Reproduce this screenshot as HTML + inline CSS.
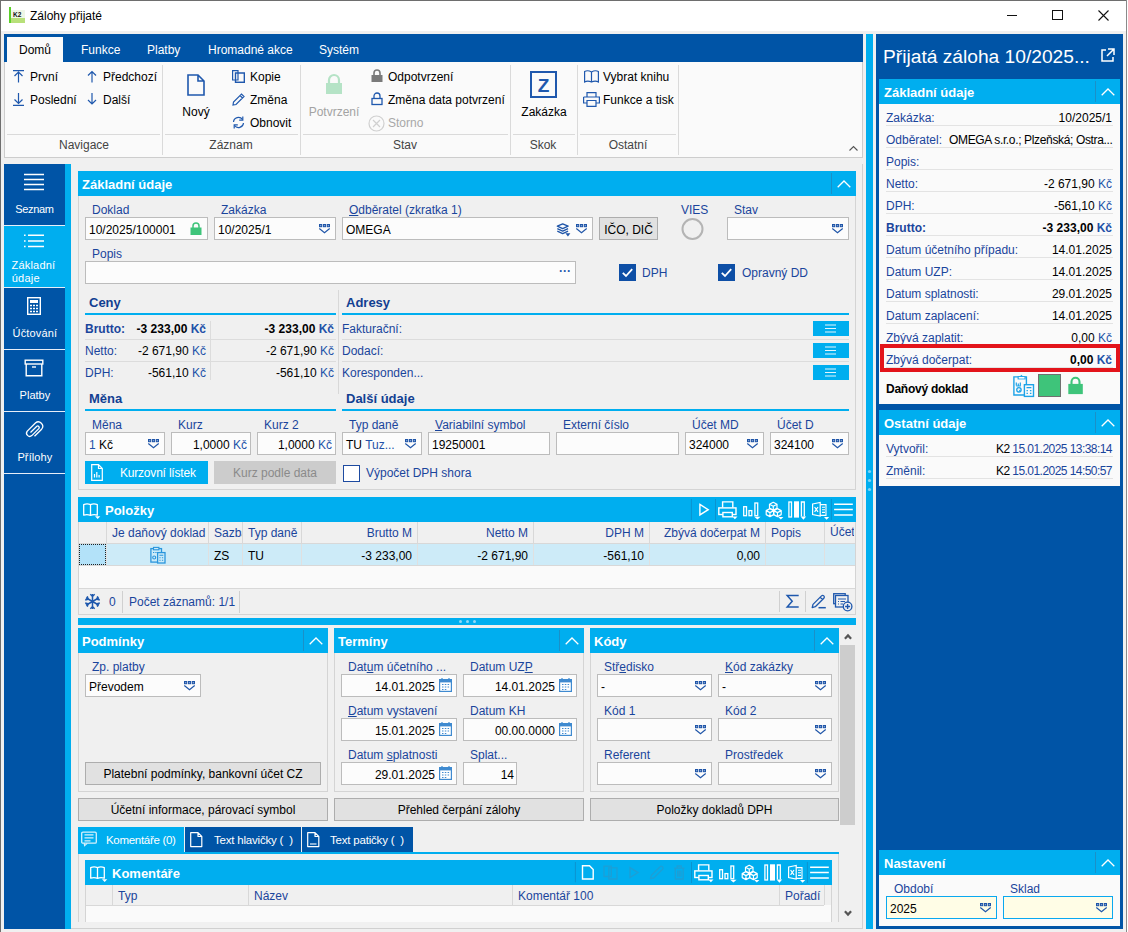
<!DOCTYPE html><html><head><meta charset="utf-8"><style>
html,body{margin:0;padding:0;width:1128px;height:932px;overflow:hidden;background:#f0f0f0;}
.a{position:absolute;box-sizing:border-box;}
.t{font-family:"Liberation Sans", sans-serif;white-space:nowrap;}
svg{overflow:visible}
</style></head><body>
<div class="a" style="left:0px;top:0px;width:1128px;height:932px;background:#f0f0f0"></div>
<div class="a" style="left:1127px;top:0px;width:1px;height:932px;background:#ffffff"></div>
<div class="a" style="left:0px;top:0px;width:1127px;height:31px;background:#ffffff"></div>
<div class="a" style="left:0px;top:0px;width:1px;height:932px;background:#6e6e6e"></div>
<div class="a" style="left:0px;top:0px;width:1127px;height:1px;background:#6e6e6e"></div>
<div class="a" style="left:1126px;top:0px;width:1px;height:932px;background:#8a8a8a"></div>
<svg class="a" style="left:9px;top:7px;" width="17" height="17" viewBox="0 0 17 17"><rect x="0" y="0" width="2" height="16" fill="#5ccf2a"/><rect x="2" y="3" width="14" height="13" fill="#eef6e6"/><rect x="2" y="11" width="14" height="5" fill="#b8e07a"/><text x="4" y="10" font-family="Liberation Sans" font-weight="700" font-size="6.5" fill="#111">K2</text></svg>
<div class="a t" style="left:30px;top:10px;font-size:12px;line-height:12px;color:#000;font-weight:400;">Zálohy přijaté</div>
<div class="a" style="left:1007px;top:15px;width:10px;height:1px;background:#111"></div>
<div class="a" style="left:1052px;top:10px;width:11px;height:10px;border:1px solid #111"></div>
<svg class="a" style="left:1098px;top:10px;" width="11" height="11" viewBox="0 0 11 11"><path d="M0.5 0.5 L10.5 10.5 M10.5 0.5 L0.5 10.5" stroke="#111" stroke-width="1.1"/></svg>
<div class="a" style="left:4px;top:34px;width:859px;height:28px;background:#0054a6"></div>
<div class="a" style="left:7px;top:37px;width:56px;height:25px;background:#fafafa"></div>
<div class="a t" style="left:19px;top:44px;font-size:12px;line-height:12px;color:#000;font-weight:400;">Domů</div>
<div class="a t" style="left:81px;top:44px;font-size:12px;line-height:12px;color:#fff;font-weight:400;">Funkce</div>
<div class="a t" style="left:147px;top:44px;font-size:12px;line-height:12px;color:#fff;font-weight:400;">Platby</div>
<div class="a t" style="left:208px;top:44px;font-size:12px;line-height:12px;color:#fff;font-weight:400;">Hromadné akce</div>
<div class="a t" style="left:319px;top:44px;font-size:12px;line-height:12px;color:#fff;font-weight:400;">Systém</div>
<div class="a" style="left:4px;top:62px;width:859px;height:96px;background:#fafafa;border:1px solid #cdcdcd;border-top:none"></div>
<div class="a" style="left:162px;top:65px;width:1px;height:90px;background:#dadada"></div>
<div class="a" style="left:300px;top:65px;width:1px;height:90px;background:#dadada"></div>
<div class="a" style="left:510px;top:65px;width:1px;height:90px;background:#dadada"></div>
<div class="a" style="left:577px;top:65px;width:1px;height:90px;background:#dadada"></div>
<div class="a" style="left:678px;top:65px;width:1px;height:90px;background:#dadada"></div>
<div class="a" style="left:7px;top:134px;width:153px;height:1px;background:#dadada"></div>
<div class="a" style="left:165px;top:134px;width:133px;height:1px;background:#dadada"></div>
<div class="a" style="left:303px;top:134px;width:205px;height:1px;background:#dadada"></div>
<div class="a" style="left:513px;top:134px;width:62px;height:1px;background:#dadada"></div>
<div class="a" style="left:580px;top:134px;width:96px;height:1px;background:#dadada"></div>
<div class="a t" style="left:-16.0px;width:200px;text-align:center;top:139px;font-size:12px;line-height:12px;color:#444;font-weight:400;">Navigace</div>
<div class="a t" style="left:131.0px;width:200px;text-align:center;top:139px;font-size:12px;line-height:12px;color:#444;font-weight:400;">Záznam</div>
<div class="a t" style="left:305.0px;width:200px;text-align:center;top:139px;font-size:12px;line-height:12px;color:#444;font-weight:400;">Stav</div>
<div class="a t" style="left:443.0px;width:200px;text-align:center;top:139px;font-size:12px;line-height:12px;color:#444;font-weight:400;">Skok</div>
<div class="a t" style="left:528.0px;width:200px;text-align:center;top:139px;font-size:12px;line-height:12px;color:#444;font-weight:400;">Ostatní</div>
<svg class="a" style="left:849px;top:146px;" width="9" height="5" viewBox="0 0 9 5"><path d="M0.5 4.5 L4.5 0.5 L8.5 4.5" stroke="#555" fill="none" stroke-width="1.1"/></svg>
<svg class="a" style="left:13px;top:70px;" width="11" height="13" viewBox="0 0 11 13"><path d="M0 0.6 H11 M5.5 2 V12.5 M1.5 6 L5.5 2 L9.5 6" stroke="#1f58ad" fill="none" stroke-width="1.2"/></svg>
<div class="a t" style="left:30px;top:71px;font-size:12px;line-height:12px;color:#000;font-weight:400;">První</div>
<svg class="a" style="left:13px;top:93px;" width="11" height="13" viewBox="0 0 11 13"><path d="M0 12.4 H11 M5.5 0 V10.5 M1.5 6.5 L5.5 10.5 L9.5 6.5" stroke="#1f58ad" fill="none" stroke-width="1.2"/></svg>
<div class="a t" style="left:30px;top:94px;font-size:12px;line-height:12px;color:#000;font-weight:400;">Poslední</div>
<svg class="a" style="left:87px;top:70px;" width="10" height="13" viewBox="0 0 10 13"><path d="M5 1.5 V12.5 M1 5.5 L5 1.5 L9 5.5" stroke="#1f58ad" fill="none" stroke-width="1.2"/></svg>
<div class="a t" style="left:103px;top:71px;font-size:12px;line-height:12px;color:#000;font-weight:400;">Předchozí</div>
<svg class="a" style="left:87px;top:93px;" width="10" height="13" viewBox="0 0 10 13"><path d="M5 0 V11 M1 7 L5 11 L9 7" stroke="#1f58ad" fill="none" stroke-width="1.2"/></svg>
<div class="a t" style="left:103px;top:94px;font-size:12px;line-height:12px;color:#000;font-weight:400;">Další</div>
<svg class="a" style="left:187px;top:74px;" width="18" height="22" viewBox="0 0 18 22"><path d="M1 1 H11 L17 7 V21 H1 Z M11 1 V7 H17" stroke="#1f58ad" fill="none" stroke-width="1.6"/></svg>
<div class="a t" style="left:156.0px;width:80px;text-align:center;top:106px;font-size:12px;line-height:12px;color:#000;font-weight:400;">Nový</div>
<svg class="a" style="left:232px;top:70px;" width="13" height="13" viewBox="0 0 13 13"><path d="M0.6 0.6 H6 V10 H0.6 Z M3.5 3 H12.4 V12.4 H3.5 Z" stroke="#1f58ad" fill="#fafafa" stroke-width="1.2"/><path d="M3.5 3 H12.4 V12.4 H3.5 Z" stroke="#1f58ad" fill="none" stroke-width="1.2"/></svg>
<div class="a t" style="left:250px;top:71px;font-size:12px;line-height:12px;color:#000;font-weight:400;">Kopie</div>
<svg class="a" style="left:232px;top:93px;" width="13" height="13" viewBox="0 0 13 13"><path d="M1 12 L1.5 9 L9.5 1 L12 3.5 L4 11.5 Z M8 2.5 L10.5 5" stroke="#1f58ad" fill="none" stroke-width="1.2"/></svg>
<div class="a t" style="left:250px;top:94px;font-size:12px;line-height:12px;color:#000;font-weight:400;">Změna</div>
<svg class="a" style="left:232px;top:116px;" width="13" height="13" viewBox="0 0 13 13"><path d="M1.5 6 A5 5 0 0 1 10.5 3.5 M11.5 7 A5 5 0 0 1 2.5 9.5" stroke="#1f58ad" fill="none" stroke-width="1.2"/><path d="M10.8 0.5 V4.2 H7.2 M2.2 12.5 V8.8 H5.8" stroke="#1f58ad" fill="none" stroke-width="1.2"/></svg>
<div class="a t" style="left:250px;top:117px;font-size:12px;line-height:12px;color:#000;font-weight:400;">Obnovit</div>
<svg class="a" style="left:325px;top:74px;" width="18" height="21" viewBox="0 0 18 21"><path d="M4 9 V6 A5 5 0 0 1 14 6 V9" stroke="#b5e3c6" fill="none" stroke-width="2.2"/><rect x="1" y="9" width="16" height="11" fill="#b5e3c6"/></svg>
<div class="a t" style="left:284.0px;width:100px;text-align:center;top:106px;font-size:12px;line-height:12px;color:#a3a3a3;font-weight:400;">Potvrzení</div>
<svg class="a" style="left:371px;top:69px;" width="12" height="13" viewBox="0 0 12 13"><path d="M3 6 V4 A3 3 0 0 1 9 4 V6" stroke="#7a7a7a" fill="none" stroke-width="1.6"/><rect x="0.5" y="6" width="11" height="7" fill="#7a7a7a"/></svg>
<div class="a t" style="left:388px;top:71px;font-size:12px;line-height:12px;color:#000;font-weight:400;">Odpotvrzení</div>
<svg class="a" style="left:371px;top:92px;" width="12" height="13" viewBox="0 0 12 13"><path d="M3 6 V4 A3 3 0 0 1 9 4 V6" stroke="#1f58ad" fill="none" stroke-width="1.3"/><rect x="1" y="6.5" width="10" height="6" fill="none" stroke="#1f58ad" stroke-width="1.3"/></svg>
<div class="a t" style="left:388px;top:94px;font-size:12px;line-height:12px;color:#000;font-weight:400;">Změna data potvrzení</div>
<svg class="a" style="left:368px;top:115px;" width="17" height="17" viewBox="0 0 17 17"><circle cx="8.5" cy="8.5" r="7.5" stroke="#d0d0d0" fill="none" stroke-width="1.2"/><path d="M5 5 L12 12 M12 5 L5 12" stroke="#d0d0d0" stroke-width="1.2"/></svg>
<div class="a t" style="left:388px;top:117px;font-size:12px;line-height:12px;color:#a8a8a8;font-weight:400;">Storno</div>
<svg class="a" style="left:530px;top:71px;" width="27" height="27" viewBox="0 0 27 27"><rect x="1" y="1" width="25" height="25" fill="none" stroke="#1f58ad" stroke-width="2"/><text x="13.5" y="21" text-anchor="middle" font-family="Liberation Sans" font-weight="700" font-size="19" fill="#1f58ad">Z</text></svg>
<div class="a t" style="left:504.0px;width:80px;text-align:center;top:106px;font-size:12px;line-height:12px;color:#000;font-weight:400;">Zakázka</div>
<svg class="a" style="left:584px;top:70px;" width="15" height="13" viewBox="0 0 15 13"><path d="M7.5 2 C5 0.5 2.5 0.5 0.6 1.5 V12 C2.5 11 5 11 7.5 12 C10 11 12.5 11 14.4 12 V1.5 C12.5 0.5 10 0.5 7.5 2 Z M7.5 2 V12" stroke="#1f58ad" fill="none" stroke-width="1.2"/></svg>
<div class="a t" style="left:603px;top:71px;font-size:12px;line-height:12px;color:#000;font-weight:400;">Vybrat knihu</div>
<svg class="a" style="left:583px;top:92px;" width="17" height="15" viewBox="0 0 17 15"><path d="M4 5 V0.6 H13 V5 M0.6 5 H16.4 V11 H13 M4 11 H0.6 V5 M4 8.5 H13 V14.4 H4 Z" stroke="#1f58ad" fill="none" stroke-width="1.2"/></svg>
<div class="a t" style="left:603px;top:94px;font-size:12px;line-height:12px;color:#000;font-weight:400;">Funkce a tisk</div>
<div class="a" style="left:4px;top:164px;width:61px;height:765px;background:#0054a6"></div>
<div class="a" style="left:65px;top:164px;width:6px;height:765px;background:#00aeef"></div>
<div class="a" style="left:4px;top:226px;width:61px;height:61px;background:#00aeef"></div>
<div class="a" style="left:4px;top:225px;width:61px;height:1px;background:#e8eef8"></div>
<div class="a" style="left:4px;top:287px;width:61px;height:1px;background:#e8eef8"></div>
<div class="a" style="left:4px;top:349px;width:61px;height:1px;background:#e8eef8"></div>
<div class="a" style="left:4px;top:411px;width:61px;height:1px;background:#e8eef8"></div>
<div class="a" style="left:4px;top:473px;width:61px;height:1px;background:#e8eef8"></div>
<svg class="a" style="left:24px;top:173px;" width="20" height="18" viewBox="0 0 20 18"><path d="M0 1.5 H20 M0 6.5 H20 M0 11.5 H20 M0 16.5 H20" stroke="#fff" stroke-width="1.4"/></svg>
<div class="a t" style="left:-5.5px;width:80px;text-align:center;top:204px;font-size:11px;line-height:11px;color:#fff;font-weight:400;letter-spacing:-0.35px">Seznam</div>
<svg class="a" style="left:23px;top:233px;" width="22" height="16" viewBox="0 0 22 16"><path d="M5 2.3 H21 M5 8 H21 M5 13.5 H21" stroke="#fff" stroke-width="1.5"/><path d="M1 2.3 H2.6 M1 8 H2.6 M1 13.5 H2.6" stroke="#fff" stroke-width="1.5"/></svg>
<div class="a t" style="left:11.5px;top:260px;font-size:11px;line-height:11px;color:#fff;font-weight:400;letter-spacing:0.2px">Základní</div>
<div class="a t" style="left:11.8px;top:273px;font-size:11px;line-height:11px;color:#fff;font-weight:400;letter-spacing:0.2px">údaje</div>
<svg class="a" style="left:27px;top:297px;" width="14" height="18" viewBox="0 0 14 18"><rect x="0.7" y="0.7" width="12.6" height="16.6" fill="none" stroke="#fff" stroke-width="1.4"/><rect x="3" y="3" width="8" height="3" fill="#fff"/><path d="M3 8.5 H5 M6 8.5 H8 M9 8.5 H11 M3 11.5 H5 M6 11.5 H8 M9 11.5 H11 M3 14.5 H5 M6 14.5 H8 M9 14.5 H11" stroke="#fff" stroke-width="1.6"/></svg>
<div class="a t" style="left:-5.100000000000001px;width:80px;text-align:center;top:328px;font-size:11px;line-height:11px;color:#fff;font-weight:400;letter-spacing:0.15px">Účtování</div>
<svg class="a" style="left:24px;top:359px;" width="20" height="18" viewBox="0 0 20 18"><rect x="1.2" y="1.2" width="17.6" height="3.8" fill="none" stroke="#fff" stroke-width="1.4"/><path d="M2.2 5 V16.8 H17.8 V5" fill="none" stroke="#fff" stroke-width="1.4"/><path d="M8 8 H12" stroke="#fff" stroke-width="1.4"/></svg>
<div class="a t" style="left:-5.100000000000001px;width:80px;text-align:center;top:390px;font-size:11px;line-height:11px;color:#fff;font-weight:400;">Platby</div>
<svg class="a" style="left:25px;top:421px;" width="18" height="19" viewBox="0 0 18 19"><path d="M5.5 11.5 L11.8 5.2 A1.6 1.6 0 0 1 14 7.4 L6.8 14.6 A3.2 3.2 0 0 1 2.3 10.1 L10.4 2 A4.4 4.4 0 0 1 16.6 8.2 L9.5 15.3" stroke="#fff" fill="none" stroke-width="1.3"/></svg>
<div class="a t" style="left:-5.100000000000001px;width:80px;text-align:center;top:452px;font-size:11px;line-height:11px;color:#fff;font-weight:400;letter-spacing:0.1px">Přílohy</div>
<div class="a" style="left:71px;top:164px;width:791px;height:765px;background:#f0f0f0"></div>
<div class="a" style="left:862px;top:164px;width:1px;height:765px;background:#d0d0d0"></div>
<div class="a" style="left:866px;top:34px;width:7px;height:895px;background:#00aeef"></div>
<svg class="a" style="left:867px;top:469px;" width="5" height="5" viewBox="0 0 5 5"><circle cx="2.5" cy="2.5" r="1.6" fill="#7fd3f5"/></svg>
<svg class="a" style="left:867px;top:478px;" width="5" height="5" viewBox="0 0 5 5"><circle cx="2.5" cy="2.5" r="1.6" fill="#7fd3f5"/></svg>
<svg class="a" style="left:867px;top:487px;" width="5" height="5" viewBox="0 0 5 5"><circle cx="2.5" cy="2.5" r="1.6" fill="#7fd3f5"/></svg>
<div class="a" style="left:876px;top:34px;width:247px;height:895px;background:#0054a6"></div>
<div class="a t" style="left:883px;top:47px;font-size:19.2px;line-height:19.2px;color:#fff;font-weight:400;">Přijatá záloha 10/2025...</div>
<svg class="a" style="left:1101px;top:48px;" width="14" height="14" viewBox="0 0 14 14"><path d="M5 2 H1 V13 H12 V9" stroke="#fff" fill="none" stroke-width="1.5"/><path d="M7 1 H13 V7 M13 1 L6 8" stroke="#fff" fill="none" stroke-width="1.5"/></svg>
<div class="a" style="left:879px;top:79px;width:241px;height:25px;background:#00aeef"></div>
<div class="a t" style="left:884px;top:86px;font-size:13px;line-height:13px;color:#fff;font-weight:700;">Základní údaje</div>
<div class="a" style="left:1095px;top:81px;width:1px;height:21px;background:#1a90c8"></div>
<svg class="a" style="left:1101px;top:88px;" width="14" height="8" viewBox="0 0 14 8"><path d="M0.7 7.3 L7 1 L13.3 7.3" stroke="#fff" fill="none" stroke-width="1.3"/></svg>
<div class="a" style="left:879px;top:104px;width:241px;height:300px;background:#fafafa"></div>
<div class="a" style="left:886px;top:125px;width:227px;height:1px;background:#e3e3e3"></div>
<div class="a t" style="left:886px;top:112px;font-size:12px;line-height:12px;color:#1a459c;font-weight:400;">Zakázka:</div>
<div class="a t" style="left:912px;width:200px;text-align:right;top:112px;font-size:12px;line-height:12px;color:#000;font-weight:400;">10/2025/1</div>
<div class="a" style="left:886px;top:147px;width:227px;height:1px;background:#e3e3e3"></div>
<div class="a t" style="left:886px;top:134px;font-size:12px;line-height:12px;color:#1a459c;font-weight:400;">Odběratel:</div>
<div class="a" style="left:886px;top:169px;width:227px;height:1px;background:#e3e3e3"></div>
<div class="a t" style="left:886px;top:156px;font-size:12px;line-height:12px;color:#1a459c;font-weight:400;">Popis:</div>
<div class="a" style="left:886px;top:191px;width:227px;height:1px;background:#e3e3e3"></div>
<div class="a t" style="left:886px;top:178px;font-size:12px;line-height:12px;color:#1a459c;font-weight:400;">Netto:</div>
<div class="a t" style="left:912px;width:200px;text-align:right;top:178px;font-size:12px;line-height:12px;color:#000;font-weight:400;">-2 671,90 <span style="color:#2352a8">Kč</span></div>
<div class="a" style="left:886px;top:213px;width:227px;height:1px;background:#e3e3e3"></div>
<div class="a t" style="left:886px;top:200px;font-size:12px;line-height:12px;color:#1a459c;font-weight:400;">DPH:</div>
<div class="a t" style="left:912px;width:200px;text-align:right;top:200px;font-size:12px;line-height:12px;color:#000;font-weight:400;">-561,10 <span style="color:#2352a8">Kč</span></div>
<div class="a" style="left:886px;top:235px;width:227px;height:1px;background:#e3e3e3"></div>
<div class="a t" style="left:886px;top:222px;font-size:12px;line-height:12px;color:#1a459c;font-weight:700;">Brutto:</div>
<div class="a t" style="left:912px;width:200px;text-align:right;top:222px;font-size:12px;line-height:12px;color:#000;font-weight:700;">-3 233,00 <span style="color:#2352a8">Kč</span></div>
<div class="a" style="left:886px;top:257px;width:227px;height:1px;background:#e3e3e3"></div>
<div class="a t" style="left:886px;top:244px;font-size:12px;line-height:12px;color:#1a459c;font-weight:400;">Datum účetního případu:</div>
<div class="a t" style="left:912px;width:200px;text-align:right;top:244px;font-size:12px;line-height:12px;color:#000;font-weight:400;">14.01.2025</div>
<div class="a" style="left:886px;top:279px;width:227px;height:1px;background:#e3e3e3"></div>
<div class="a t" style="left:886px;top:266px;font-size:12px;line-height:12px;color:#1a459c;font-weight:400;">Datum UZP:</div>
<div class="a t" style="left:912px;width:200px;text-align:right;top:266px;font-size:12px;line-height:12px;color:#000;font-weight:400;">14.01.2025</div>
<div class="a" style="left:886px;top:301px;width:227px;height:1px;background:#e3e3e3"></div>
<div class="a t" style="left:886px;top:288px;font-size:12px;line-height:12px;color:#1a459c;font-weight:400;">Datum splatnosti:</div>
<div class="a t" style="left:912px;width:200px;text-align:right;top:288px;font-size:12px;line-height:12px;color:#000;font-weight:400;">29.01.2025</div>
<div class="a" style="left:886px;top:323px;width:227px;height:1px;background:#e3e3e3"></div>
<div class="a t" style="left:886px;top:310px;font-size:12px;line-height:12px;color:#1a459c;font-weight:400;">Datum zaplacení:</div>
<div class="a t" style="left:912px;width:200px;text-align:right;top:310px;font-size:12px;line-height:12px;color:#000;font-weight:400;">14.01.2025</div>
<div class="a" style="left:886px;top:345px;width:227px;height:1px;background:#e3e3e3"></div>
<div class="a t" style="left:886px;top:332px;font-size:12px;line-height:12px;color:#1a459c;font-weight:400;">Zbývá zaplatit:</div>
<div class="a t" style="left:912px;width:200px;text-align:right;top:332px;font-size:12px;line-height:12px;color:#000;font-weight:400;">0,00 <span style="color:#2352a8">Kč</span></div>
<div class="a" style="left:886px;top:367px;width:227px;height:1px;background:#e3e3e3"></div>
<div class="a t" style="left:886px;top:354px;font-size:12px;line-height:12px;color:#1a459c;font-weight:400;">Zbývá dočerpat:</div>
<div class="a t" style="left:912px;width:200px;text-align:right;top:354px;font-size:12px;line-height:12px;color:#000;font-weight:700;">0,00 <span style="color:#2352a8">Kč</span></div>
<div class="a t" style="left:949px;top:134px;font-size:12px;line-height:12px;color:#000;font-weight:400;letter-spacing:-0.35px">OMEGA s.r.o.; Plzeňská; Ostra...</div>
<div class="a" style="left:880px;top:344px;width:240px;height:28px;border:4px solid #e3141b"></div>
<div class="a t" style="left:886px;top:383px;font-size:12px;line-height:12px;color:#000;font-weight:700;letter-spacing:-0.25px">Daňový doklad</div>
<svg class="a" style="left:1012px;top:374px;" width="23" height="24" viewBox="0 0 23 24"><path d="M1.9 2.9 H14.4 V21 H1.9 Z" fill="none" stroke="#1ea3e8" stroke-width="1.4"/><path d="M5.6 2.2 H13.6 V5.4 H5.6 Z" fill="#1ea3e8"/><path d="M9.4 0.7 L11 2.6 H7.8 Z" fill="#1ea3e8"/><rect x="6.7" y="3" width="5.8" height="1.6" fill="#fafafa"/><path d="M4.3 8.6 V11.6 M6.3 9.6 V11.6 M8.3 8.6 V11.6 M4.3 12 H8.8" stroke="#1ea3e8" stroke-width="1.2"/><circle cx="6.9" cy="15.8" r="2.2" fill="none" stroke="#1ea3e8" stroke-width="1.4"/><path d="M6.9 15.8 L8.2 17" stroke="#1ea3e8" stroke-width="1"/><rect x="12.4" y="10.7" width="9.1" height="11.7" fill="#fafafa" stroke="#1ea3e8" stroke-width="1.4"/><path d="M14.5 13.6 H19.4 M14.5 16.7 H15.9 M17.9 16.7 H19.4 M14.5 19.4 H15.9 M17.9 19.4 H19.4" stroke="#1ea3e8" stroke-width="1.3"/></svg>
<div class="a" style="left:1038px;top:374px;width:23px;height:23px;background:#3ec47a;border:1px solid #707070"></div>
<svg class="a" style="left:1068px;top:376px;" width="15" height="19" viewBox="0 0 15 19"><path d="M3.5 8.5 V5.8 A4 4 0 0 1 11.5 5.8 V8.5" stroke="#3ec47a" fill="none" stroke-width="2.1"/><rect x="0.3" y="7.9" width="14.5" height="10.2" fill="#3ec47a"/></svg>
<div class="a" style="left:879px;top:410px;width:241px;height:25px;background:#00aeef"></div>
<div class="a t" style="left:884px;top:417px;font-size:13px;line-height:13px;color:#fff;font-weight:700;">Ostatní údaje</div>
<div class="a" style="left:1095px;top:412px;width:1px;height:21px;background:#1a90c8"></div>
<svg class="a" style="left:1101px;top:419px;" width="14" height="8" viewBox="0 0 14 8"><path d="M0.7 7.3 L7 1 L13.3 7.3" stroke="#fff" fill="none" stroke-width="1.3"/></svg>
<div class="a" style="left:879px;top:435px;width:241px;height:51px;background:#fafafa"></div>
<div class="a" style="left:886px;top:456px;width:227px;height:1px;background:#e3e3e3"></div>
<div class="a t" style="left:886px;top:443px;font-size:12px;line-height:12px;color:#1a459c;font-weight:400;">Vytvořil:</div>
<div class="a t" style="left:912px;width:200px;text-align:right;top:443px;font-size:12px;line-height:12px;color:#1a459c;font-weight:400;letter-spacing:-0.55px"><span style="color:#000">K2</span> 15.01.2025 13:38:14</div>
<div class="a" style="left:886px;top:478px;width:227px;height:1px;background:#e3e3e3"></div>
<div class="a t" style="left:886px;top:465px;font-size:12px;line-height:12px;color:#1a459c;font-weight:400;">Změnil:</div>
<div class="a t" style="left:912px;width:200px;text-align:right;top:465px;font-size:12px;line-height:12px;color:#1a459c;font-weight:400;letter-spacing:-0.55px"><span style="color:#000">K2</span> 15.01.2025 14:50:57</div>
<div class="a" style="left:879px;top:850px;width:241px;height:25px;background:#00aeef"></div>
<div class="a t" style="left:884px;top:857px;font-size:13px;line-height:13px;color:#fff;font-weight:700;">Nastavení</div>
<div class="a" style="left:1095px;top:852px;width:1px;height:21px;background:#1a90c8"></div>
<svg class="a" style="left:1101px;top:859px;" width="14" height="8" viewBox="0 0 14 8"><path d="M0.7 7.3 L7 1 L13.3 7.3" stroke="#fff" fill="none" stroke-width="1.3"/></svg>
<div class="a" style="left:879px;top:875px;width:241px;height:51px;background:#fafafa"></div>
<div class="a t" style="left:894px;top:883px;font-size:12px;line-height:12px;color:#1a459c;font-weight:400;">Období</div>
<div class="a t" style="left:1010px;top:883px;font-size:12px;line-height:12px;color:#1a459c;font-weight:400;">Sklad</div>
<div class="a" style="left:886px;top:896px;width:111px;height:23px;background:#fffde6;border:1px solid #0aa8f0"></div>
<div class="a t" style="left:890px;top:903px;font-size:12px;line-height:12px;color:#000;font-weight:400;">2025</div>
<svg class="a" style="left:980px;top:903px;" width="12" height="10" viewBox="0 0 12 10"><rect x="0.5" y="0.5" width="2.2" height="2.2" fill="#7fa0d0" stroke="#1f55a8" stroke-width="1"/><rect x="4.4" y="0.5" width="2.2" height="2.2" fill="#7fa0d0" stroke="#1f55a8" stroke-width="1"/><rect x="8.3" y="0.5" width="2.2" height="2.2" fill="#7fa0d0" stroke="#1f55a8" stroke-width="1"/><path d="M0.3 4.5 L5.5 8.8 L10.7 4.5" stroke="#1f55a8" fill="none" stroke-width="1.15"/></svg>
<div class="a" style="left:1003px;top:896px;width:110px;height:23px;background:#fffde6;border:1px solid #0aa8f0"></div>
<svg class="a" style="left:1096px;top:903px;" width="12" height="10" viewBox="0 0 12 10"><rect x="0.5" y="0.5" width="2.2" height="2.2" fill="#7fa0d0" stroke="#1f55a8" stroke-width="1"/><rect x="4.4" y="0.5" width="2.2" height="2.2" fill="#7fa0d0" stroke="#1f55a8" stroke-width="1"/><rect x="8.3" y="0.5" width="2.2" height="2.2" fill="#7fa0d0" stroke="#1f55a8" stroke-width="1"/><path d="M0.3 4.5 L5.5 8.8 L10.7 4.5" stroke="#1f55a8" fill="none" stroke-width="1.15"/></svg>
<div class="a" style="left:78px;top:171px;width:778px;height:319px;background:#f0f0f0;border:1px solid #d4d4d4;border-top:none"></div>
<div class="a" style="left:78px;top:171px;width:778px;height:25px;background:#00aeef"></div>
<div class="a t" style="left:82px;top:178px;font-size:13px;line-height:13px;color:#fff;font-weight:700;">Základní údaje</div>
<div class="a" style="left:831px;top:173px;width:1px;height:21px;background:#1a90c8"></div>
<svg class="a" style="left:836.5px;top:179.8px;" width="14" height="8" viewBox="0 0 14 8"><path d="M0.7 7.3 L7 1 L13.3 7.3" stroke="#fff" fill="none" stroke-width="1.3"/></svg>
<div class="a t" style="left:92px;top:204px;font-size:12px;line-height:12px;color:#1a459c;font-weight:400;">Doklad</div>
<div class="a t" style="left:221px;top:204px;font-size:12px;line-height:12px;color:#1a459c;font-weight:400;">Zakázka</div>
<div class="a t" style="left:349px;top:204px;font-size:12px;line-height:12px;color:#1a459c;font-weight:400;"><u>O</u>dběratel (zkratka 1)</div>
<div class="a t" style="left:681px;top:204px;font-size:12px;line-height:12px;color:#1a459c;font-weight:400;">VIES</div>
<div class="a t" style="left:734px;top:204px;font-size:12px;line-height:12px;color:#1a459c;font-weight:400;">Stav</div>
<div class="a" style="left:85px;top:217px;width:123px;height:23px;background:#fcfcfc;border:1px solid #bcbcbc"></div>
<div class="a t" style="left:89px;top:224px;font-size:12px;line-height:12px;color:#000;font-weight:400;">10/2025/100001</div>
<svg class="a" style="left:190px;top:222px;" width="12" height="13" viewBox="0 0 12 13"><path d="M3 6 V4 A3 3 0 0 1 9 4 V6" stroke="#3ec47a" fill="none" stroke-width="1.5"/><rect x="0.5" y="5.5" width="11" height="7.5" fill="#3ec47a"/></svg>
<div class="a" style="left:214px;top:217px;width:122px;height:23px;background:#fcfcfc;border:1px solid #bcbcbc"></div>
<div class="a t" style="left:218px;top:224px;font-size:12px;line-height:12px;color:#000;font-weight:400;">10/2025/1</div>
<svg class="a" style="left:319px;top:224px;" width="12" height="10" viewBox="0 0 12 10"><rect x="0.5" y="0.5" width="2.2" height="2.2" fill="#7fa0d0" stroke="#1f55a8" stroke-width="1"/><rect x="4.4" y="0.5" width="2.2" height="2.2" fill="#7fa0d0" stroke="#1f55a8" stroke-width="1"/><rect x="8.3" y="0.5" width="2.2" height="2.2" fill="#7fa0d0" stroke="#1f55a8" stroke-width="1"/><path d="M0.3 4.5 L5.5 8.8 L10.7 4.5" stroke="#1f55a8" fill="none" stroke-width="1.15"/></svg>
<div class="a" style="left:342px;top:217px;width:251px;height:23px;background:#fcfcfc;border:1px solid #bcbcbc"></div>
<div class="a t" style="left:346px;top:224px;font-size:12px;line-height:12px;color:#000;font-weight:400;">OMEGA</div>
<svg class="a" style="left:576px;top:224px;" width="12" height="10" viewBox="0 0 12 10"><rect x="0.5" y="0.5" width="2.2" height="2.2" fill="#7fa0d0" stroke="#1f55a8" stroke-width="1"/><rect x="4.4" y="0.5" width="2.2" height="2.2" fill="#7fa0d0" stroke="#1f55a8" stroke-width="1"/><rect x="8.3" y="0.5" width="2.2" height="2.2" fill="#7fa0d0" stroke="#1f55a8" stroke-width="1"/><path d="M0.3 4.5 L5.5 8.8 L10.7 4.5" stroke="#1f55a8" fill="none" stroke-width="1.15"/></svg>
<svg class="a" style="left:556px;top:223px;" width="15" height="14" viewBox="0 0 15 14"><path d="M1.3 3.2 L6.7 0.8 L12.1 3.2 L6.7 5.6 Z" stroke="#1f55a8" fill="none" stroke-width="1.3" stroke-linejoin="round"/><path d="M1.3 5.7 L6.7 8.1 L12.1 5.7 M1.3 8.2 L6.7 10.6 L12.1 8.2" stroke="#1f55a8" fill="none" stroke-width="1.3" stroke-linejoin="round"/><path d="M9.4 10.3 H14.4 L11.9 13.4 Z" fill="#1f55a8"/></svg>
<div class="a" style="left:599px;top:217px;width:59px;height:23px;background:#e1e1e1;border:1px solid #adadad"></div>
<div class="a t" style="left:588.5px;width:80px;text-align:center;top:224px;font-size:12px;line-height:12px;color:#000;font-weight:400;">IČO, DIČ</div>
<svg class="a" style="left:681px;top:218px;" width="23" height="22" viewBox="0 0 23 22"><circle cx="11.5" cy="11" r="10" fill="none" stroke="#b4b4b4" stroke-width="2"/></svg>
<div class="a" style="left:727px;top:217px;width:122px;height:23px;background:#fcfcfc;border:1px solid #bcbcbc"></div>
<svg class="a" style="left:832px;top:224px;" width="12" height="10" viewBox="0 0 12 10"><rect x="0.5" y="0.5" width="2.2" height="2.2" fill="#7fa0d0" stroke="#1f55a8" stroke-width="1"/><rect x="4.4" y="0.5" width="2.2" height="2.2" fill="#7fa0d0" stroke="#1f55a8" stroke-width="1"/><rect x="8.3" y="0.5" width="2.2" height="2.2" fill="#7fa0d0" stroke="#1f55a8" stroke-width="1"/><path d="M0.3 4.5 L5.5 8.8 L10.7 4.5" stroke="#1f55a8" fill="none" stroke-width="1.15"/></svg>
<div class="a t" style="left:92px;top:248px;font-size:12px;line-height:12px;color:#1a459c;font-weight:400;">Popis</div>
<div class="a" style="left:85px;top:261px;width:491px;height:23px;background:#fcfcfc;border:1px solid #bcbcbc"></div>
<div class="a t" style="left:559px;top:265px;font-size:12px;line-height:12px;color:#1f58ad;font-weight:400;letter-spacing:0px;font-weight:700">···</div>
<div class="a" style="left:619px;top:264px;width:17px;height:17px;background:#0e4fa6"></div>
<svg class="a" style="left:619px;top:264px;" width="17" height="17" viewBox="0 0 17 17"><path d="M3.8 8.8 L7 12 L13.2 5.2" stroke="#fff" fill="none" stroke-width="1.8"/></svg>
<div class="a t" style="left:642px;top:267px;font-size:12px;line-height:12px;color:#1a459c;font-weight:400;">DPH</div>
<div class="a" style="left:718px;top:264px;width:17px;height:17px;background:#0e4fa6"></div>
<svg class="a" style="left:718px;top:264px;" width="17" height="17" viewBox="0 0 17 17"><path d="M3.8 8.8 L7 12 L13.2 5.2" stroke="#fff" fill="none" stroke-width="1.8"/></svg>
<div class="a t" style="left:742px;top:267px;font-size:12px;line-height:12px;color:#1a459c;font-weight:400;">Opravný DD</div>
<div class="a t" style="left:89px;top:296px;font-size:13px;line-height:13px;color:#123f92;font-weight:700;">Ceny</div>
<div class="a" style="left:85px;top:313px;width:251px;height:2px;background:#00aeef"></div>
<div class="a t" style="left:346px;top:296px;font-size:13px;line-height:13px;color:#123f92;font-weight:700;">Adresy</div>
<div class="a" style="left:342px;top:313px;width:507px;height:2px;background:#00aeef"></div>
<div class="a" style="left:338px;top:290px;width:1px;height:104px;background:#d8d8d8"></div>
<div class="a" style="left:210px;top:321px;width:1px;height:59px;background:#dcdcdc"></div>
<div class="a" style="left:85px;top:339px;width:251px;height:1px;background:#dcdcdc"></div>
<div class="a" style="left:342px;top:339px;width:507px;height:1px;background:#dcdcdc"></div>
<div class="a t" style="left:85px;top:323px;font-size:12px;line-height:12px;color:#1a459c;font-weight:700;">Brutto:</div>
<div class="a t" style="left:6px;width:200px;text-align:right;top:323px;font-size:12px;line-height:12px;color:#000;font-weight:700;">-3 233,00 <span style="color:#2352a8">Kč</span></div>
<div class="a t" style="left:134px;width:200px;text-align:right;top:323px;font-size:12px;line-height:12px;color:#000;font-weight:700;">-3 233,00 <span style="color:#2352a8">Kč</span></div>
<div class="a" style="left:85px;top:361px;width:251px;height:1px;background:#dcdcdc"></div>
<div class="a" style="left:342px;top:361px;width:507px;height:1px;background:#dcdcdc"></div>
<div class="a t" style="left:85px;top:345px;font-size:12px;line-height:12px;color:#1a459c;font-weight:400;">Netto:</div>
<div class="a t" style="left:6px;width:200px;text-align:right;top:345px;font-size:12px;line-height:12px;color:#000;font-weight:400;">-2 671,90 <span style="color:#2352a8">Kč</span></div>
<div class="a t" style="left:134px;width:200px;text-align:right;top:345px;font-size:12px;line-height:12px;color:#000;font-weight:400;">-2 671,90 <span style="color:#2352a8">Kč</span></div>
<div class="a t" style="left:85px;top:367px;font-size:12px;line-height:12px;color:#1a459c;font-weight:400;">DPH:</div>
<div class="a t" style="left:6px;width:200px;text-align:right;top:367px;font-size:12px;line-height:12px;color:#000;font-weight:400;">-561,10 <span style="color:#2352a8">Kč</span></div>
<div class="a t" style="left:134px;width:200px;text-align:right;top:367px;font-size:12px;line-height:12px;color:#000;font-weight:400;">-561,10 <span style="color:#2352a8">Kč</span></div>
<div class="a t" style="left:342px;top:323px;font-size:12px;line-height:12px;color:#1a459c;font-weight:400;">Fakturační:</div>
<div class="a" style="left:813px;top:321px;width:36px;height:15px;background:#00aeef"></div>
<svg class="a" style="left:825px;top:324px;" width="12" height="9" viewBox="0 0 12 9"><path d="M0 1 H11 M0 4.5 H11 M0 8 H11" stroke="#e4f6fd" stroke-width="1"/></svg>
<div class="a t" style="left:342px;top:345px;font-size:12px;line-height:12px;color:#1a459c;font-weight:400;">Dodací:</div>
<div class="a" style="left:813px;top:343px;width:36px;height:15px;background:#00aeef"></div>
<svg class="a" style="left:825px;top:346px;" width="12" height="9" viewBox="0 0 12 9"><path d="M0 1 H11 M0 4.5 H11 M0 8 H11" stroke="#e4f6fd" stroke-width="1"/></svg>
<div class="a t" style="left:342px;top:367px;font-size:12px;line-height:12px;color:#1a459c;font-weight:400;">Koresponden...</div>
<div class="a" style="left:813px;top:365px;width:36px;height:15px;background:#00aeef"></div>
<svg class="a" style="left:825px;top:368px;" width="12" height="9" viewBox="0 0 12 9"><path d="M0 1 H11 M0 4.5 H11 M0 8 H11" stroke="#e4f6fd" stroke-width="1"/></svg>
<div class="a t" style="left:89px;top:392px;font-size:13px;line-height:13px;color:#123f92;font-weight:700;">Měna</div>
<div class="a" style="left:85px;top:409px;width:251px;height:2px;background:#00aeef"></div>
<div class="a t" style="left:346px;top:392px;font-size:13px;line-height:13px;color:#123f92;font-weight:700;">Další údaje</div>
<div class="a" style="left:342px;top:409px;width:507px;height:2px;background:#00aeef"></div>
<div class="a t" style="left:92px;top:419px;font-size:12px;line-height:12px;color:#1a459c;font-weight:400;">Měna</div>
<div class="a t" style="left:178px;top:419px;font-size:12px;line-height:12px;color:#1a459c;font-weight:400;">Kurz</div>
<div class="a t" style="left:264px;top:419px;font-size:12px;line-height:12px;color:#1a459c;font-weight:400;">Kurz 2</div>
<div class="a t" style="left:349px;top:419px;font-size:12px;line-height:12px;color:#1a459c;font-weight:400;">Typ daně</div>
<div class="a t" style="left:435px;top:419px;font-size:12px;line-height:12px;color:#1a459c;font-weight:400;"><u>V</u>ariabilní symbol</div>
<div class="a t" style="left:563px;top:419px;font-size:12px;line-height:12px;color:#1a459c;font-weight:400;">Externí číslo</div>
<div class="a t" style="left:692px;top:419px;font-size:12px;line-height:12px;color:#1a459c;font-weight:400;">Účet MD</div>
<div class="a t" style="left:777px;top:419px;font-size:12px;line-height:12px;color:#1a459c;font-weight:400;">Účet D</div>
<div class="a" style="left:85px;top:432px;width:80px;height:23px;background:#fcfcfc;border:1px solid #bcbcbc"></div>
<div class="a t" style="left:89px;top:439px;font-size:12px;line-height:12px;color:#000;font-weight:400;"><span style="color:#2352a8">1</span> Kč</div>
<svg class="a" style="left:148px;top:439px;" width="12" height="10" viewBox="0 0 12 10"><rect x="0.5" y="0.5" width="2.2" height="2.2" fill="#7fa0d0" stroke="#1f55a8" stroke-width="1"/><rect x="4.4" y="0.5" width="2.2" height="2.2" fill="#7fa0d0" stroke="#1f55a8" stroke-width="1"/><rect x="8.3" y="0.5" width="2.2" height="2.2" fill="#7fa0d0" stroke="#1f55a8" stroke-width="1"/><path d="M0.3 4.5 L5.5 8.8 L10.7 4.5" stroke="#1f55a8" fill="none" stroke-width="1.15"/></svg>
<div class="a" style="left:171px;top:432px;width:80px;height:23px;background:#fcfcfc;border:1px solid #bcbcbc"></div>
<div class="a t" style="left:147px;width:100px;text-align:right;top:439px;font-size:12px;line-height:12px;color:#000;font-weight:400;">1,0000 <span style="color:#2352a8">Kč</span></div>
<div class="a" style="left:257px;top:432px;width:79px;height:23px;background:#fcfcfc;border:1px solid #bcbcbc"></div>
<div class="a t" style="left:232px;width:100px;text-align:right;top:439px;font-size:12px;line-height:12px;color:#000;font-weight:400;">1,0000 <span style="color:#2352a8">Kč</span></div>
<div class="a" style="left:342px;top:432px;width:80px;height:23px;background:#fcfcfc;border:1px solid #bcbcbc"></div>
<div class="a t" style="left:346px;top:439px;font-size:12px;line-height:12px;color:#000;font-weight:400;">TU <span style="color:#2352a8">Tuz...</span></div>
<svg class="a" style="left:405px;top:439px;" width="12" height="10" viewBox="0 0 12 10"><rect x="0.5" y="0.5" width="2.2" height="2.2" fill="#7fa0d0" stroke="#1f55a8" stroke-width="1"/><rect x="4.4" y="0.5" width="2.2" height="2.2" fill="#7fa0d0" stroke="#1f55a8" stroke-width="1"/><rect x="8.3" y="0.5" width="2.2" height="2.2" fill="#7fa0d0" stroke="#1f55a8" stroke-width="1"/><path d="M0.3 4.5 L5.5 8.8 L10.7 4.5" stroke="#1f55a8" fill="none" stroke-width="1.15"/></svg>
<div class="a" style="left:428px;top:432px;width:122px;height:23px;background:#fcfcfc;border:1px solid #bcbcbc"></div>
<div class="a t" style="left:432px;top:439px;font-size:12px;line-height:12px;color:#000;font-weight:400;">19250001</div>
<div class="a" style="left:556px;top:432px;width:123px;height:23px;background:#fcfcfc;border:1px solid #bcbcbc"></div>
<div class="a" style="left:685px;top:432px;width:79px;height:23px;background:#fcfcfc;border:1px solid #bcbcbc"></div>
<div class="a t" style="left:689px;top:439px;font-size:12px;line-height:12px;color:#000;font-weight:400;">324000</div>
<svg class="a" style="left:747px;top:439px;" width="12" height="10" viewBox="0 0 12 10"><rect x="0.5" y="0.5" width="2.2" height="2.2" fill="#7fa0d0" stroke="#1f55a8" stroke-width="1"/><rect x="4.4" y="0.5" width="2.2" height="2.2" fill="#7fa0d0" stroke="#1f55a8" stroke-width="1"/><rect x="8.3" y="0.5" width="2.2" height="2.2" fill="#7fa0d0" stroke="#1f55a8" stroke-width="1"/><path d="M0.3 4.5 L5.5 8.8 L10.7 4.5" stroke="#1f55a8" fill="none" stroke-width="1.15"/></svg>
<div class="a" style="left:770px;top:432px;width:79px;height:23px;background:#fcfcfc;border:1px solid #bcbcbc"></div>
<div class="a t" style="left:774px;top:439px;font-size:12px;line-height:12px;color:#000;font-weight:400;">324100</div>
<svg class="a" style="left:832px;top:439px;" width="12" height="10" viewBox="0 0 12 10"><rect x="0.5" y="0.5" width="2.2" height="2.2" fill="#7fa0d0" stroke="#1f55a8" stroke-width="1"/><rect x="4.4" y="0.5" width="2.2" height="2.2" fill="#7fa0d0" stroke="#1f55a8" stroke-width="1"/><rect x="8.3" y="0.5" width="2.2" height="2.2" fill="#7fa0d0" stroke="#1f55a8" stroke-width="1"/><path d="M0.3 4.5 L5.5 8.8 L10.7 4.5" stroke="#1f55a8" fill="none" stroke-width="1.15"/></svg>
<div class="a" style="left:85px;top:461px;width:123px;height:23px;background:#00aeef"></div>
<svg class="a" style="left:91px;top:464px;" width="12" height="17" viewBox="0 0 12 17"><path d="M0.7 0.7 H7.5 L11.3 4.5 V16.3 H0.7 Z M7.5 0.7 V4.5 H11.3" stroke="#fff" fill="none" stroke-width="1.2"/><path d="M3.5 13.5 V10 M5.8 13.5 V8 M8.1 13.5 V11" stroke="#fff" stroke-width="1.2"/></svg>
<div class="a t" style="left:120px;top:467px;font-size:12px;line-height:12px;color:#fff;font-weight:400;letter-spacing:-0.2px">Kurzovní lístek</div>
<div class="a" style="left:214px;top:461px;width:122px;height:23px;background:#cccccc"></div>
<div class="a t" style="left:205.0px;width:140px;text-align:center;top:467px;font-size:12px;line-height:12px;color:#8a8a8a;font-weight:400;">Kurz podle data</div>
<div class="a" style="left:343px;top:465px;width:17px;height:17px;background:#fff;border:1px solid #1d4aa0"></div>
<div class="a t" style="left:366px;top:467px;font-size:12px;line-height:12px;color:#1a459c;font-weight:400;">Výpočet DPH shora</div>
<div class="a" style="left:78px;top:497px;width:778px;height:118px;background:#fafafa;border:1px solid #d4d4d4;border-top:none"></div>
<div class="a" style="left:78px;top:497px;width:778px;height:25px;background:#00aeef"></div>
<svg class="a" style="left:83px;top:503px;" width="18" height="17" viewBox="0 0 18 17"><path d="M0.7 12.2 V1.6 Q4.1 0 7.5 1.6 Q10.9 0 14.3 1.6 V12.2 Q10.9 10.8 7.5 12.4 Q4.1 10.8 0.7 12.2 Z M7.5 1.6 V12.4" stroke="#fff" fill="none" stroke-width="1.3" stroke-linejoin="round"/><path d="M12 13.3 H17.3 L14.65 16 Z" fill="#fff"/></svg>
<div class="a t" style="left:105px;top:504px;font-size:13px;line-height:13px;color:#fff;font-weight:700;">Položky</div>
<svg class="a" style="left:690px;top:497px;" width="30" height="25" viewBox="0 0 30 25"><path d="M1.4 2 V23" stroke="#0b93cf" stroke-width="1"/><path d="M9.9 7.4 L18.2 12.65 L9.9 17.9 Z" stroke="#fff" fill="none" stroke-width="1.4" stroke-linejoin="miter"/></svg>
<svg class="a" style="left:690px;top:497px;" width="166" height="25" viewBox="0 0 166 25"><path d="M25.5 2 V23" stroke="#0b93cf" stroke-width="1"/><path d="M32.6 10.5 V4.9 H42.8 V10.5" stroke="#fff" fill="none" stroke-width="1.4"/><rect x="28.8" y="10.9" width="17.2" height="6.6" stroke="#fff" fill="none" stroke-width="1.4"/><rect x="32.9" y="15.5" width="9.4" height="4.3" stroke="#fff" fill="#00aeef" stroke-width="1.4"/><path d="M42.3 19.6 H47.5 L44.9 22.3 Z" fill="#fff"/><rect x="53.7" y="9.7" width="2.8" height="9" stroke="#fff" fill="none" stroke-width="1.3"/><rect x="59" y="13.6" width="2.8" height="5.1" stroke="#fff" fill="none" stroke-width="1.3"/><rect x="64.9" y="6" width="2.8" height="12.7" stroke="#fff" fill="none" stroke-width="1.3"/><path d="M64.2 19.8 H70.6 L67.4 22.6 Z" fill="#fff"/><path d="M83.25 5.3 L87.0 7.3 V11.3 L83.25 13.3 L79.5 11.3 V7.3 Z M79.5 7.3 L83.25 9.3 L87.0 7.3 M83.25 9.3 V13.3" stroke="#fff" fill="none" stroke-width="1.2" stroke-linejoin="round"/><path d="M79.95 11.6 L83.7 13.6 V17.6 L79.95 19.6 L76.2 17.6 V13.6 Z M76.2 13.6 L79.95 15.6 L83.7 13.6 M79.95 15.6 V19.6" stroke="#fff" fill="none" stroke-width="1.2" stroke-linejoin="round"/><path d="M87.45 11.6 L91.2 13.6 V17.6 L87.45 19.6 L83.7 17.6 V13.6 Z M83.7 13.6 L87.45 15.6 L91.2 13.6 M87.45 15.6 V19.6" stroke="#fff" fill="none" stroke-width="1.2" stroke-linejoin="round"/><path d="M88.25 19.9 H93.4 L90.8 22.6 Z" fill="#fff"/><rect x="98.9" y="5" width="2.6" height="15" stroke="#fff" fill="none" stroke-width="1.3"/><rect x="104" y="4.3" width="5" height="16.3" fill="#fff"/><path d="M111.4 19.5 V5 H114.3 V19.5" stroke="#fff" fill="none" stroke-width="1.3"/><path d="M110.6 19.5 H116.2 L113.4 22.7 Z" fill="#fff"/><path d="M122.6 7 L130.2 5.5 V19 L122.6 17.5 Z" stroke="#fff" fill="none" stroke-width="1.2"/><path d="M124.6 10 L128 14.8 M128 10 L124.6 14.8" stroke="#fff" stroke-width="1.2"/><path d="M130.2 7.6 H136 V18.4 H130.2 M132 10.2 H135 M132 12.8 H135 M132 15.4 H135" stroke="#fff" fill="none" stroke-width="1.1"/><path d="M134 20 H139.2 L136.6 22.7 Z" fill="#fff"/><path d="M141.4 2 V23" stroke="#0b93cf" stroke-width="1"/><path d="M144.1 7.3 H162.8 M144.1 12.5 H162.8 M144.1 17.9 H162.8" stroke="#fff" stroke-width="1.5"/></svg>
<div class="a" style="left:79px;top:522px;width:776px;height:22px;background:#f0f0f0"></div>
<div class="a" style="left:79px;top:543px;width:776px;height:1px;background:#d8d8d8"></div>
<div class="a" style="left:106px;top:522px;width:1px;height:22px;background:#d8d8d8"></div>
<div class="a" style="left:208px;top:522px;width:1px;height:22px;background:#d8d8d8"></div>
<div class="a" style="left:242px;top:522px;width:1px;height:22px;background:#d8d8d8"></div>
<div class="a" style="left:301px;top:522px;width:1px;height:22px;background:#d8d8d8"></div>
<div class="a" style="left:417px;top:522px;width:1px;height:22px;background:#d8d8d8"></div>
<div class="a" style="left:533px;top:522px;width:1px;height:22px;background:#d8d8d8"></div>
<div class="a" style="left:649px;top:522px;width:1px;height:22px;background:#d8d8d8"></div>
<div class="a" style="left:765px;top:522px;width:1px;height:22px;background:#d8d8d8"></div>
<div class="a" style="left:824px;top:522px;width:1px;height:22px;background:#d8d8d8"></div>
<div class="a t" style="left:112px;top:527px;font-size:12px;line-height:12px;color:#1a459c;font-weight:400;">Je daňový doklad</div>
<div class="a t" style="left:214px;top:527px;font-size:12px;line-height:12px;color:#1a459c;font-weight:400;width:28px;overflow:hidden;">Sazb<span style="letter-spacing:-1px">a</span></div>
<div class="a t" style="left:248px;top:527px;font-size:12px;line-height:12px;color:#1a459c;font-weight:400;">Typ daně</div>
<div class="a t" style="left:312px;width:100px;text-align:right;top:527px;font-size:12px;line-height:12px;color:#1a459c;font-weight:400;">Brutto M</div>
<div class="a t" style="left:428px;width:100px;text-align:right;top:527px;font-size:12px;line-height:12px;color:#1a459c;font-weight:400;">Netto M</div>
<div class="a t" style="left:544px;width:100px;text-align:right;top:527px;font-size:12px;line-height:12px;color:#1a459c;font-weight:400;">DPH M</div>
<div class="a t" style="left:640px;width:120px;text-align:right;top:527px;font-size:12px;line-height:12px;color:#1a459c;font-weight:400;">Zbývá dočerpat M</div>
<div class="a t" style="left:771px;top:527px;font-size:12px;line-height:12px;color:#1a459c;font-weight:400;">Popis</div>
<div class="a t" style="left:830px;top:527px;font-size:12px;line-height:12px;color:#1a459c;font-weight:400;width:24px;overflow:hidden;line-height:18px;margin-top:-4px">Účet</div>
<div class="a" style="left:106px;top:544px;width:749px;height:21px;background:#cdebf8"></div>
<div class="a" style="left:79px;top:544px;width:27px;height:21px;background:#b3e2f9;border:1px dotted #222"></div>
<div class="a" style="left:79px;top:565px;width:776px;height:1px;background:#d8d8d8"></div>
<div class="a" style="left:106px;top:544px;width:1px;height:21px;background:#e0e0e0"></div>
<div class="a" style="left:208px;top:544px;width:1px;height:21px;background:#e0e0e0"></div>
<div class="a" style="left:242px;top:544px;width:1px;height:21px;background:#e0e0e0"></div>
<div class="a" style="left:301px;top:544px;width:1px;height:21px;background:#e0e0e0"></div>
<div class="a" style="left:417px;top:544px;width:1px;height:21px;background:#e0e0e0"></div>
<div class="a" style="left:533px;top:544px;width:1px;height:21px;background:#e0e0e0"></div>
<div class="a" style="left:649px;top:544px;width:1px;height:21px;background:#e0e0e0"></div>
<div class="a" style="left:765px;top:544px;width:1px;height:21px;background:#e0e0e0"></div>
<div class="a" style="left:824px;top:544px;width:1px;height:21px;background:#e0e0e0"></div>
<svg class="a" style="left:150px;top:547px;" width="16" height="17" viewBox="0 0 16 17"><rect x="0.9" y="1.6" width="10.6" height="13.5" fill="none" stroke="#2a95dc" stroke-width="1.3"/><rect x="3.5" y="0.4" width="5.4" height="2.4" fill="#cdebf8" stroke="#2a95dc" stroke-width="1.1"/><path d="M3 5.5 H4.3 M5.3 5.5 H6.6" stroke="#2a95dc" stroke-width="1"/><circle cx="4.2" cy="10.5" r="1.5" fill="none" stroke="#2a95dc" stroke-width="1.1"/><rect x="7.6" y="5.6" width="7.4" height="10.4" fill="#cdebf8" stroke="#2a95dc" stroke-width="1.3"/><path d="M9.4 8.3 H13.3 M9.4 10.8 H10.6 M11.9 10.8 H13.2 M9.4 13.2 H10.6 M11.9 13.2 H13.2" stroke="#2a95dc" stroke-width="1.1"/></svg>
<div class="a t" style="left:214px;top:550px;font-size:12px;line-height:12px;color:#000;font-weight:400;">ZS</div>
<div class="a t" style="left:248px;top:550px;font-size:12px;line-height:12px;color:#000;font-weight:400;">TU</div>
<div class="a t" style="left:312px;width:100px;text-align:right;top:550px;font-size:12px;line-height:12px;color:#000;font-weight:400;">-3 233,00</div>
<div class="a t" style="left:428px;width:100px;text-align:right;top:550px;font-size:12px;line-height:12px;color:#000;font-weight:400;">-2 671,90</div>
<div class="a t" style="left:544px;width:100px;text-align:right;top:550px;font-size:12px;line-height:12px;color:#000;font-weight:400;">-561,10</div>
<div class="a t" style="left:660px;width:100px;text-align:right;top:550px;font-size:12px;line-height:12px;color:#000;font-weight:400;">0,00</div>
<div class="a" style="left:79px;top:588px;width:776px;height:26px;background:#f0f0f0"></div>
<div class="a" style="left:79px;top:588px;width:776px;height:1px;background:#d8d8d8"></div>
<svg class="a" style="left:84px;top:593px;" width="17" height="17" viewBox="0 0 17 17"><path d="M8.5 1 V16 M2 4.75 L15 12.25 M2 12.25 L15 4.75" stroke="#1f58ad" stroke-width="1.5"/><path d="M6.3 1.2 L8.5 3.3 L10.7 1.2 M6.3 15.8 L8.5 13.7 L10.7 15.8 M1.2 7 L4.1 6.2 L3.3 3.3 M15.8 7 L12.9 6.2 L13.7 3.3 M1.2 10 L4.1 10.8 L3.3 13.7 M15.8 10 L12.9 10.8 L13.7 13.7" stroke="#1f58ad" fill="none" stroke-width="1.4"/></svg>
<div class="a t" style="left:109px;top:596px;font-size:12px;line-height:12px;color:#1a459c;font-weight:400;">0</div>
<div class="a" style="left:122px;top:591px;width:1px;height:22px;background:#d0d0d0"></div>
<div class="a" style="left:239px;top:591px;width:1px;height:22px;background:#d0d0d0"></div>
<div class="a t" style="left:129px;top:596px;font-size:12px;line-height:12px;color:#1a459c;font-weight:400;">Počet záznamů: 1/1</div>
<div class="a" style="left:779px;top:591px;width:1px;height:21px;background:#d0d0d0"></div>
<div class="a" style="left:805px;top:591px;width:1px;height:21px;background:#d0d0d0"></div>
<svg class="a" style="left:786px;top:594px;" width="14" height="15" viewBox="0 0 14 15"><path d="M12.7 1.6 H1.2 L6.2 7.2 L1.2 12.9 H12.7" stroke="#1f58ad" fill="none" stroke-width="1.5" stroke-linejoin="miter"/></svg>
<svg class="a" style="left:811px;top:594px;" width="16" height="16" viewBox="0 0 16 16"><path d="M1.2 13.6 L2 10.4 L10.5 1.9 A1.5 1.5 0 0 1 12.8 4.2 L4.3 12.7 Z M9.2 3.2 L11.5 5.5" stroke="#1f58ad" fill="none" stroke-width="1.3" stroke-linejoin="round"/><path d="M7.5 13.7 H14.8" stroke="#1f58ad" stroke-width="1.5"/></svg>
<svg class="a" style="left:832px;top:592px;" width="20" height="20" viewBox="0 0 20 20"><rect x="1.7" y="1.7" width="11.5" height="10" fill="none" stroke="#1f58ad" stroke-width="1.3"/><rect x="3.5" y="3.5" width="12.5" height="11.5" fill="#f0f0f0" stroke="#1f58ad" stroke-width="1.3"/><path d="M6 7 H14 M6 9.5 H7 M8.5 9.5 H13 M6 12 H7 M8.5 12 H11" stroke="#1f58ad" stroke-width="1.2"/><circle cx="15.6" cy="14.5" r="4.3" fill="#f0f0f0" stroke="#1f58ad" stroke-width="1.3"/><path d="M15.6 12 V17 M13.1 14.5 H18.1" stroke="#1f58ad" stroke-width="1.4"/></svg>
<div class="a" style="left:78px;top:618px;width:778px;height:7px;background:#00aeef"></div>
<svg class="a" style="left:458px;top:619px;" width="5" height="5" viewBox="0 0 5 5"><circle cx="2.5" cy="2.5" r="1.5" fill="#8fd8f7"/></svg>
<svg class="a" style="left:465px;top:619px;" width="5" height="5" viewBox="0 0 5 5"><circle cx="2.5" cy="2.5" r="1.5" fill="#8fd8f7"/></svg>
<svg class="a" style="left:472px;top:619px;" width="5" height="5" viewBox="0 0 5 5"><circle cx="2.5" cy="2.5" r="1.5" fill="#8fd8f7"/></svg>
<div class="a" style="left:78px;top:628px;width:250px;height:164px;background:#f0f0f0;border:1px solid #d4d4d4;border-top:none"></div>
<div class="a" style="left:78px;top:628px;width:250px;height:25px;background:#00aeef"></div>
<div class="a t" style="left:82px;top:635px;font-size:13px;line-height:13px;color:#fff;font-weight:700;">Podmínky</div>
<div class="a" style="left:303px;top:630px;width:1px;height:21px;background:#1a90c8"></div>
<svg class="a" style="left:308.5px;top:636.8px;" width="14" height="8" viewBox="0 0 14 8"><path d="M0.7 7.3 L7 1 L13.3 7.3" stroke="#fff" fill="none" stroke-width="1.3"/></svg>
<div class="a t" style="left:92px;top:661px;font-size:12px;line-height:12px;color:#1a459c;font-weight:400;">Zp. platby</div>
<div class="a" style="left:85px;top:674px;width:116px;height:23px;background:#fcfcfc;border:1px solid #bcbcbc"></div>
<div class="a t" style="left:89px;top:681px;font-size:12px;line-height:12px;color:#000;font-weight:400;">Převodem</div>
<svg class="a" style="left:184px;top:681px;" width="12" height="10" viewBox="0 0 12 10"><rect x="0.5" y="0.5" width="2.2" height="2.2" fill="#7fa0d0" stroke="#1f55a8" stroke-width="1"/><rect x="4.4" y="0.5" width="2.2" height="2.2" fill="#7fa0d0" stroke="#1f55a8" stroke-width="1"/><rect x="8.3" y="0.5" width="2.2" height="2.2" fill="#7fa0d0" stroke="#1f55a8" stroke-width="1"/><path d="M0.3 4.5 L5.5 8.8 L10.7 4.5" stroke="#1f55a8" fill="none" stroke-width="1.15"/></svg>
<div class="a" style="left:85px;top:762px;width:236px;height:23px;background:#e1e1e1;border:1px solid #adadad"></div>
<div class="a t" style="left:73.0px;width:260px;text-align:center;top:768px;font-size:12px;line-height:12px;color:#000;font-weight:400;">Platební podmínky, bankovní účet CZ</div>
<div class="a" style="left:334px;top:628px;width:250px;height:164px;background:#f0f0f0;border:1px solid #d4d4d4;border-top:none"></div>
<div class="a" style="left:334px;top:628px;width:250px;height:25px;background:#00aeef"></div>
<div class="a t" style="left:338px;top:635px;font-size:13px;line-height:13px;color:#fff;font-weight:700;">Termíny</div>
<div class="a" style="left:559px;top:630px;width:1px;height:21px;background:#1a90c8"></div>
<svg class="a" style="left:564.5px;top:636.8px;" width="14" height="8" viewBox="0 0 14 8"><path d="M0.7 7.3 L7 1 L13.3 7.3" stroke="#fff" fill="none" stroke-width="1.3"/></svg>
<div class="a t" style="left:348px;top:661px;font-size:12px;line-height:12px;color:#1a459c;font-weight:400;">Dat<u>u</u>m účetního ...</div>
<div class="a t" style="left:470px;top:661px;font-size:12px;line-height:12px;color:#1a459c;font-weight:400;">Datum UZ<u>P</u></div>
<div class="a" style="left:341px;top:674px;width:116px;height:23px;background:#fcfcfc;border:1px solid #bcbcbc"></div>
<div class="a t" style="left:335px;width:100px;text-align:right;top:681px;font-size:12px;line-height:12px;color:#000;font-weight:400;">14.01.2025</div>
<svg class="a" style="left:439px;top:678px;" width="13" height="14" viewBox="0 0 13 14"><rect x="0.6" y="1.6" width="11.8" height="11.8" fill="#fff" stroke="#3f8ad0" stroke-width="1.2"/><rect x="0.6" y="1.6" width="11.8" height="2.8" fill="#3f8ad0"/><path d="M3 0 V2.5 M10 0 V2.5" stroke="#3f8ad0" stroke-width="1.2"/><path d="M3 6.5 H4.5 M5.8 6.5 H7.3 M8.6 6.5 H10.1 M3 9 H4.5 M5.8 9 H7.3 M8.6 9 H10.1 M3 11.5 H4.5 M5.8 11.5 H7.3" stroke="#3f8ad0" stroke-width="1.2"/></svg>
<div class="a" style="left:463px;top:674px;width:114px;height:23px;background:#fcfcfc;border:1px solid #bcbcbc"></div>
<div class="a t" style="left:455px;width:100px;text-align:right;top:681px;font-size:12px;line-height:12px;color:#000;font-weight:400;">14.01.2025</div>
<svg class="a" style="left:559px;top:678px;" width="13" height="14" viewBox="0 0 13 14"><rect x="0.6" y="1.6" width="11.8" height="11.8" fill="#fff" stroke="#3f8ad0" stroke-width="1.2"/><rect x="0.6" y="1.6" width="11.8" height="2.8" fill="#3f8ad0"/><path d="M3 0 V2.5 M10 0 V2.5" stroke="#3f8ad0" stroke-width="1.2"/><path d="M3 6.5 H4.5 M5.8 6.5 H7.3 M8.6 6.5 H10.1 M3 9 H4.5 M5.8 9 H7.3 M8.6 9 H10.1 M3 11.5 H4.5 M5.8 11.5 H7.3" stroke="#3f8ad0" stroke-width="1.2"/></svg>
<div class="a t" style="left:348px;top:705px;font-size:12px;line-height:12px;color:#1a459c;font-weight:400;"><u>D</u>atum vystavení</div>
<div class="a t" style="left:470px;top:705px;font-size:12px;line-height:12px;color:#1a459c;font-weight:400;">Datum KH</div>
<div class="a" style="left:341px;top:718px;width:116px;height:23px;background:#fcfcfc;border:1px solid #bcbcbc"></div>
<div class="a t" style="left:335px;width:100px;text-align:right;top:725px;font-size:12px;line-height:12px;color:#000;font-weight:400;">15.01.2025</div>
<svg class="a" style="left:439px;top:722px;" width="13" height="14" viewBox="0 0 13 14"><rect x="0.6" y="1.6" width="11.8" height="11.8" fill="#fff" stroke="#3f8ad0" stroke-width="1.2"/><rect x="0.6" y="1.6" width="11.8" height="2.8" fill="#3f8ad0"/><path d="M3 0 V2.5 M10 0 V2.5" stroke="#3f8ad0" stroke-width="1.2"/><path d="M3 6.5 H4.5 M5.8 6.5 H7.3 M8.6 6.5 H10.1 M3 9 H4.5 M5.8 9 H7.3 M8.6 9 H10.1 M3 11.5 H4.5 M5.8 11.5 H7.3" stroke="#3f8ad0" stroke-width="1.2"/></svg>
<div class="a" style="left:463px;top:718px;width:114px;height:23px;background:#fcfcfc;border:1px solid #bcbcbc"></div>
<div class="a t" style="left:455px;width:100px;text-align:right;top:725px;font-size:12px;line-height:12px;color:#000;font-weight:400;">00.00.0000</div>
<svg class="a" style="left:559px;top:722px;" width="13" height="14" viewBox="0 0 13 14"><rect x="0.6" y="1.6" width="11.8" height="11.8" fill="#fff" stroke="#3f8ad0" stroke-width="1.2"/><rect x="0.6" y="1.6" width="11.8" height="2.8" fill="#3f8ad0"/><path d="M3 0 V2.5 M10 0 V2.5" stroke="#3f8ad0" stroke-width="1.2"/><path d="M3 6.5 H4.5 M5.8 6.5 H7.3 M8.6 6.5 H10.1 M3 9 H4.5 M5.8 9 H7.3 M8.6 9 H10.1 M3 11.5 H4.5 M5.8 11.5 H7.3" stroke="#3f8ad0" stroke-width="1.2"/></svg>
<div class="a t" style="left:348px;top:749px;font-size:12px;line-height:12px;color:#1a459c;font-weight:400;">Datum <u>s</u>platnosti</div>
<div class="a t" style="left:470px;top:749px;font-size:12px;line-height:12px;color:#1a459c;font-weight:400;">Splat...</div>
<div class="a" style="left:341px;top:762px;width:116px;height:23px;background:#fcfcfc;border:1px solid #bcbcbc"></div>
<div class="a t" style="left:335px;width:100px;text-align:right;top:769px;font-size:12px;line-height:12px;color:#000;font-weight:400;">29.01.2025</div>
<svg class="a" style="left:439px;top:766px;" width="13" height="14" viewBox="0 0 13 14"><rect x="0.6" y="1.6" width="11.8" height="11.8" fill="#fff" stroke="#3f8ad0" stroke-width="1.2"/><rect x="0.6" y="1.6" width="11.8" height="2.8" fill="#3f8ad0"/><path d="M3 0 V2.5 M10 0 V2.5" stroke="#3f8ad0" stroke-width="1.2"/><path d="M3 6.5 H4.5 M5.8 6.5 H7.3 M8.6 6.5 H10.1 M3 9 H4.5 M5.8 9 H7.3 M8.6 9 H10.1 M3 11.5 H4.5 M5.8 11.5 H7.3" stroke="#3f8ad0" stroke-width="1.2"/></svg>
<div class="a" style="left:463px;top:762px;width:54px;height:23px;background:#fcfcfc;border:1px solid #bcbcbc"></div>
<div class="a t" style="left:464px;width:50px;text-align:right;top:769px;font-size:12px;line-height:12px;color:#000;font-weight:400;">14</div>
<div class="a" style="left:590px;top:628px;width:249px;height:164px;background:#f0f0f0;border:1px solid #d4d4d4;border-top:none"></div>
<div class="a" style="left:590px;top:628px;width:249px;height:25px;background:#00aeef"></div>
<div class="a t" style="left:594px;top:635px;font-size:13px;line-height:13px;color:#fff;font-weight:700;">Kódy</div>
<div class="a" style="left:814px;top:630px;width:1px;height:21px;background:#1a90c8"></div>
<svg class="a" style="left:819.5px;top:636.8px;" width="14" height="8" viewBox="0 0 14 8"><path d="M0.7 7.3 L7 1 L13.3 7.3" stroke="#fff" fill="none" stroke-width="1.3"/></svg>
<div class="a t" style="left:604px;top:661px;font-size:12px;line-height:12px;color:#1a459c;font-weight:400;">Stř<u>e</u>disko</div>
<div class="a t" style="left:725px;top:661px;font-size:12px;line-height:12px;color:#1a459c;font-weight:400;"><u>K</u>ód zakázky</div>
<div class="a" style="left:597px;top:674px;width:115px;height:23px;background:#fcfcfc;border:1px solid #bcbcbc"></div>
<div class="a t" style="left:601px;top:681px;font-size:12px;line-height:12px;color:#000;font-weight:400;">-</div>
<svg class="a" style="left:695px;top:681px;" width="12" height="10" viewBox="0 0 12 10"><rect x="0.5" y="0.5" width="2.2" height="2.2" fill="#7fa0d0" stroke="#1f55a8" stroke-width="1"/><rect x="4.4" y="0.5" width="2.2" height="2.2" fill="#7fa0d0" stroke="#1f55a8" stroke-width="1"/><rect x="8.3" y="0.5" width="2.2" height="2.2" fill="#7fa0d0" stroke="#1f55a8" stroke-width="1"/><path d="M0.3 4.5 L5.5 8.8 L10.7 4.5" stroke="#1f55a8" fill="none" stroke-width="1.15"/></svg>
<div class="a" style="left:718px;top:674px;width:114px;height:23px;background:#fcfcfc;border:1px solid #bcbcbc"></div>
<div class="a t" style="left:722px;top:681px;font-size:12px;line-height:12px;color:#000;font-weight:400;">-</div>
<svg class="a" style="left:815px;top:681px;" width="12" height="10" viewBox="0 0 12 10"><rect x="0.5" y="0.5" width="2.2" height="2.2" fill="#7fa0d0" stroke="#1f55a8" stroke-width="1"/><rect x="4.4" y="0.5" width="2.2" height="2.2" fill="#7fa0d0" stroke="#1f55a8" stroke-width="1"/><rect x="8.3" y="0.5" width="2.2" height="2.2" fill="#7fa0d0" stroke="#1f55a8" stroke-width="1"/><path d="M0.3 4.5 L5.5 8.8 L10.7 4.5" stroke="#1f55a8" fill="none" stroke-width="1.15"/></svg>
<div class="a t" style="left:604px;top:705px;font-size:12px;line-height:12px;color:#1a459c;font-weight:400;">Kód 1</div>
<div class="a t" style="left:725px;top:705px;font-size:12px;line-height:12px;color:#1a459c;font-weight:400;">Kód 2</div>
<div class="a" style="left:597px;top:718px;width:115px;height:23px;background:#fcfcfc;border:1px solid #bcbcbc"></div>
<svg class="a" style="left:695px;top:725px;" width="12" height="10" viewBox="0 0 12 10"><rect x="0.5" y="0.5" width="2.2" height="2.2" fill="#7fa0d0" stroke="#1f55a8" stroke-width="1"/><rect x="4.4" y="0.5" width="2.2" height="2.2" fill="#7fa0d0" stroke="#1f55a8" stroke-width="1"/><rect x="8.3" y="0.5" width="2.2" height="2.2" fill="#7fa0d0" stroke="#1f55a8" stroke-width="1"/><path d="M0.3 4.5 L5.5 8.8 L10.7 4.5" stroke="#1f55a8" fill="none" stroke-width="1.15"/></svg>
<div class="a" style="left:718px;top:718px;width:114px;height:23px;background:#fcfcfc;border:1px solid #bcbcbc"></div>
<svg class="a" style="left:815px;top:725px;" width="12" height="10" viewBox="0 0 12 10"><rect x="0.5" y="0.5" width="2.2" height="2.2" fill="#7fa0d0" stroke="#1f55a8" stroke-width="1"/><rect x="4.4" y="0.5" width="2.2" height="2.2" fill="#7fa0d0" stroke="#1f55a8" stroke-width="1"/><rect x="8.3" y="0.5" width="2.2" height="2.2" fill="#7fa0d0" stroke="#1f55a8" stroke-width="1"/><path d="M0.3 4.5 L5.5 8.8 L10.7 4.5" stroke="#1f55a8" fill="none" stroke-width="1.15"/></svg>
<div class="a t" style="left:604px;top:749px;font-size:12px;line-height:12px;color:#1a459c;font-weight:400;">Referent</div>
<div class="a t" style="left:725px;top:749px;font-size:12px;line-height:12px;color:#1a459c;font-weight:400;">Prostředek</div>
<div class="a" style="left:597px;top:762px;width:115px;height:23px;background:#fcfcfc;border:1px solid #bcbcbc"></div>
<svg class="a" style="left:695px;top:769px;" width="12" height="10" viewBox="0 0 12 10"><rect x="0.5" y="0.5" width="2.2" height="2.2" fill="#7fa0d0" stroke="#1f55a8" stroke-width="1"/><rect x="4.4" y="0.5" width="2.2" height="2.2" fill="#7fa0d0" stroke="#1f55a8" stroke-width="1"/><rect x="8.3" y="0.5" width="2.2" height="2.2" fill="#7fa0d0" stroke="#1f55a8" stroke-width="1"/><path d="M0.3 4.5 L5.5 8.8 L10.7 4.5" stroke="#1f55a8" fill="none" stroke-width="1.15"/></svg>
<div class="a" style="left:718px;top:762px;width:114px;height:23px;background:#fcfcfc;border:1px solid #bcbcbc"></div>
<svg class="a" style="left:815px;top:769px;" width="12" height="10" viewBox="0 0 12 10"><rect x="0.5" y="0.5" width="2.2" height="2.2" fill="#7fa0d0" stroke="#1f55a8" stroke-width="1"/><rect x="4.4" y="0.5" width="2.2" height="2.2" fill="#7fa0d0" stroke="#1f55a8" stroke-width="1"/><rect x="8.3" y="0.5" width="2.2" height="2.2" fill="#7fa0d0" stroke="#1f55a8" stroke-width="1"/><path d="M0.3 4.5 L5.5 8.8 L10.7 4.5" stroke="#1f55a8" fill="none" stroke-width="1.15"/></svg>
<div class="a" style="left:78px;top:798px;width:250px;height:23px;background:#e1e1e1;border:1px solid #adadad"></div>
<div class="a t" style="left:73.0px;width:260px;text-align:center;top:804px;font-size:12px;line-height:12px;color:#000;font-weight:400;">Účetní informace, párovací symbol</div>
<div class="a" style="left:334px;top:798px;width:250px;height:23px;background:#e1e1e1;border:1px solid #adadad"></div>
<div class="a t" style="left:329.0px;width:260px;text-align:center;top:804px;font-size:12px;line-height:12px;color:#000;font-weight:400;">Přehled čerpání zálohy</div>
<div class="a" style="left:590px;top:798px;width:249px;height:23px;background:#e1e1e1;border:1px solid #adadad"></div>
<div class="a t" style="left:584.5px;width:260px;text-align:center;top:804px;font-size:12px;line-height:12px;color:#000;font-weight:400;">Položky dokladů DPH</div>
<div class="a" style="left:78px;top:827px;width:106px;height:26px;background:#00aeef"></div>
<svg class="a" style="left:81px;top:831px;" width="17" height="16" viewBox="0 0 17 16"><rect x="0.7" y="1.2" width="14.6" height="11" rx="1.2" fill="none" stroke="#d8f1fc" stroke-width="1.3"/><path d="M3.5 3.9 H12.5 M3.5 6.9 H12.5 M3.5 9.9 H9.5" stroke="#d8f1fc" stroke-width="1.2"/><path d="M3.2 12.2 L3.6 14.6 L6.2 12.4" fill="none" stroke="#d8f1fc" stroke-width="1.2"/></svg>
<div class="a t" style="left:106px;top:835px;font-size:11.5px;line-height:11.5px;color:#fff;font-weight:400;letter-spacing:-0.3px">Komentáře (0)</div>
<div class="a" style="left:185px;top:827px;width:116px;height:26px;background:#0054a6"></div>
<svg class="a" style="left:190px;top:832px;" width="13" height="16" viewBox="0 0 13 16"><path d="M0.7 0.7 H8 L11.8 4.5 V14.6 H0.7 Z M8 0.7 V4.5 H11.8" stroke="#fff" fill="none" stroke-width="1.2" stroke-linejoin="round"/></svg>
<div class="a t" style="left:214px;top:835px;font-size:11.5px;line-height:11.5px;color:#fff;font-weight:400;letter-spacing:-0.2px">Text hlavičky (&nbsp; )</div>
<div class="a" style="left:302px;top:827px;width:111px;height:26px;background:#0054a6"></div>
<svg class="a" style="left:307px;top:832px;" width="13" height="16" viewBox="0 0 13 16"><path d="M0.7 0.7 H8 L11.8 4.5 V14.6 H0.7 Z M8 0.7 V4.5 H11.8" stroke="#fff" fill="none" stroke-width="1.2" stroke-linejoin="round"/><path d="M3 12 H9.5" stroke="#fff" stroke-width="1.1"/></svg>
<div class="a t" style="left:330px;top:835px;font-size:11.5px;line-height:11.5px;color:#fff;font-weight:400;letter-spacing:-0.2px">Text patičky (&nbsp; )</div>
<div class="a" style="left:78px;top:852px;width:761px;height:2px;background:#00aeef"></div>
<div class="a" style="left:78px;top:854px;width:1px;height:75px;background:#d4d4d4"></div>
<div class="a" style="left:838px;top:854px;width:1px;height:75px;background:#d4d4d4"></div>
<div class="a" style="left:85px;top:860px;width:747px;height:65px;background:#fafafa;border-left:1px solid #d4d4d4;border-right:1px solid #d4d4d4"></div>
<div class="a" style="left:85px;top:860px;width:747px;height:25px;background:#00aeef"></div>
<svg class="a" style="left:90px;top:866px;" width="18" height="17" viewBox="0 0 18 17"><path d="M0.7 12.2 V1.6 Q4.1 0 7.5 1.6 Q10.9 0 14.3 1.6 V12.2 Q10.9 10.8 7.5 12.4 Q4.1 10.8 0.7 12.2 Z M7.5 1.6 V12.4" stroke="#fff" fill="none" stroke-width="1.3" stroke-linejoin="round"/><path d="M12 13.3 H17.3 L14.65 16 Z" fill="#fff"/></svg>
<div class="a t" style="left:112px;top:867px;font-size:13px;line-height:13px;color:#fff;font-weight:700;">Komentáře</div>
<svg class="a" style="left:572px;top:860px;" width="120" height="25" viewBox="0 0 120 25"><path d="M3.4 2 V22.3" stroke="#0b93cf" stroke-width="1"/><path d="M10.5 5.8 H17.5 L21.2 9.5 V19 H10.5 Z" stroke="#fff" fill="none" stroke-width="1.4" stroke-linejoin="miter"/><path d="M32 6.2 H39.3 V16.5 H32 Z M36.8 7.9 H45 V19 H36.8 Z" stroke="#1c9fd6" fill="none" stroke-width="1.3"/><path d="M58 7.6 L66 12.6 L58 17.6 Z" stroke="#1c9fd6" fill="none" stroke-width="1.4"/><path d="M78.5 18.7 L79.3 15.5 L88 6.8 A1.5 1.5 0 0 1 90.6 9.2 L81.8 18 Z" stroke="#1c9fd6" fill="none" stroke-width="1.3" stroke-linejoin="round"/><path d="M102 8.2 H112.5 M105.2 8.2 V6 H109.3 V8.2 M103.3 8.2 V19 H111.2 V8.2 M105.7 10.5 V16.8 M107.3 10.5 V16.8 M108.9 10.5 V16.8" stroke="#1c9fd6" fill="none" stroke-width="1.3"/></svg>
<svg class="a" style="left:666px;top:860px;" width="166" height="25" viewBox="0 0 166 25"><path d="M25.5 2 V23" stroke="#0b93cf" stroke-width="1"/><path d="M32.6 10.5 V4.9 H42.8 V10.5" stroke="#fff" fill="none" stroke-width="1.4"/><rect x="28.8" y="10.9" width="17.2" height="6.6" stroke="#fff" fill="none" stroke-width="1.4"/><rect x="32.9" y="15.5" width="9.4" height="4.3" stroke="#fff" fill="#00aeef" stroke-width="1.4"/><path d="M42.3 19.6 H47.5 L44.9 22.3 Z" fill="#fff"/><rect x="53.7" y="9.7" width="2.8" height="9" stroke="#fff" fill="none" stroke-width="1.3"/><rect x="59" y="13.6" width="2.8" height="5.1" stroke="#fff" fill="none" stroke-width="1.3"/><rect x="64.9" y="6" width="2.8" height="12.7" stroke="#fff" fill="none" stroke-width="1.3"/><path d="M64.2 19.8 H70.6 L67.4 22.6 Z" fill="#fff"/><path d="M83.25 5.3 L87.0 7.3 V11.3 L83.25 13.3 L79.5 11.3 V7.3 Z M79.5 7.3 L83.25 9.3 L87.0 7.3 M83.25 9.3 V13.3" stroke="#fff" fill="none" stroke-width="1.2" stroke-linejoin="round"/><path d="M79.95 11.6 L83.7 13.6 V17.6 L79.95 19.6 L76.2 17.6 V13.6 Z M76.2 13.6 L79.95 15.6 L83.7 13.6 M79.95 15.6 V19.6" stroke="#fff" fill="none" stroke-width="1.2" stroke-linejoin="round"/><path d="M87.45 11.6 L91.2 13.6 V17.6 L87.45 19.6 L83.7 17.6 V13.6 Z M83.7 13.6 L87.45 15.6 L91.2 13.6 M87.45 15.6 V19.6" stroke="#fff" fill="none" stroke-width="1.2" stroke-linejoin="round"/><path d="M88.25 19.9 H93.4 L90.8 22.6 Z" fill="#fff"/><rect x="98.9" y="5" width="2.6" height="15" stroke="#fff" fill="none" stroke-width="1.3"/><rect x="104" y="4.3" width="5" height="16.3" fill="#fff"/><path d="M111.4 19.5 V5 H114.3 V19.5" stroke="#fff" fill="none" stroke-width="1.3"/><path d="M110.6 19.5 H116.2 L113.4 22.7 Z" fill="#fff"/><path d="M122.6 7 L130.2 5.5 V19 L122.6 17.5 Z" stroke="#fff" fill="none" stroke-width="1.2"/><path d="M124.6 10 L128 14.8 M128 10 L124.6 14.8" stroke="#fff" stroke-width="1.2"/><path d="M130.2 7.6 H136 V18.4 H130.2 M132 10.2 H135 M132 12.8 H135 M132 15.4 H135" stroke="#fff" fill="none" stroke-width="1.1"/><path d="M134 20 H139.2 L136.6 22.7 Z" fill="#fff"/><path d="M141.4 2 V23" stroke="#0b93cf" stroke-width="1"/><path d="M144.1 7.3 H162.8 M144.1 12.5 H162.8 M144.1 17.9 H162.8" stroke="#fff" stroke-width="1.5"/></svg>
<div class="a" style="left:86px;top:885px;width:745px;height:20px;background:#f0f0f0"></div>
<div class="a" style="left:86px;top:905px;width:738px;height:1px;background:#d8d8d8"></div>
<div class="a" style="left:112px;top:885px;width:1px;height:20px;background:#d8d8d8"></div>
<div class="a" style="left:248px;top:885px;width:1px;height:20px;background:#d8d8d8"></div>
<div class="a" style="left:512px;top:885px;width:1px;height:20px;background:#d8d8d8"></div>
<div class="a" style="left:779px;top:885px;width:1px;height:20px;background:#d8d8d8"></div>
<div class="a" style="left:824px;top:885px;width:1px;height:20px;background:#d8d8d8"></div>
<div class="a t" style="left:118px;top:890px;font-size:12px;line-height:12px;color:#1a459c;font-weight:400;">Typ</div>
<div class="a t" style="left:254px;top:890px;font-size:12px;line-height:12px;color:#1a459c;font-weight:400;">Název</div>
<div class="a t" style="left:518px;top:890px;font-size:12px;line-height:12px;color:#1a459c;font-weight:400;">Komentář 100</div>
<div class="a t" style="left:785px;top:890px;font-size:12px;line-height:12px;color:#1a459c;font-weight:400;">Pořadí</div>
<div class="a" style="left:831px;top:885px;width:1px;height:40px;background:#d4d4d4"></div>
<div class="a" style="left:71px;top:922px;width:791px;height:7px;background:#f0f0f0"></div>
<div class="a" style="left:840px;top:628px;width:16px;height:301px;background:#f0f0f0"></div>
<div class="a" style="left:840px;top:645px;width:15px;height:180px;background:#cdcdcd"></div>
<svg class="a" style="left:844px;top:633px;" width="8" height="7" viewBox="0 0 8 7"><path d="M0.9 5.8 L4 2.4 L7.1 5.8" stroke="#555" fill="none" stroke-width="2.2"/></svg>
<svg class="a" style="left:844px;top:910px;" width="8" height="7" viewBox="0 0 8 7"><path d="M0.9 1.2 L4 4.6 L7.1 1.2" stroke="#555" fill="none" stroke-width="2.2"/></svg>
<div class="a" style="left:71px;top:928px;width:792px;height:1px;background:#d0d0d0"></div>
</body></html>
